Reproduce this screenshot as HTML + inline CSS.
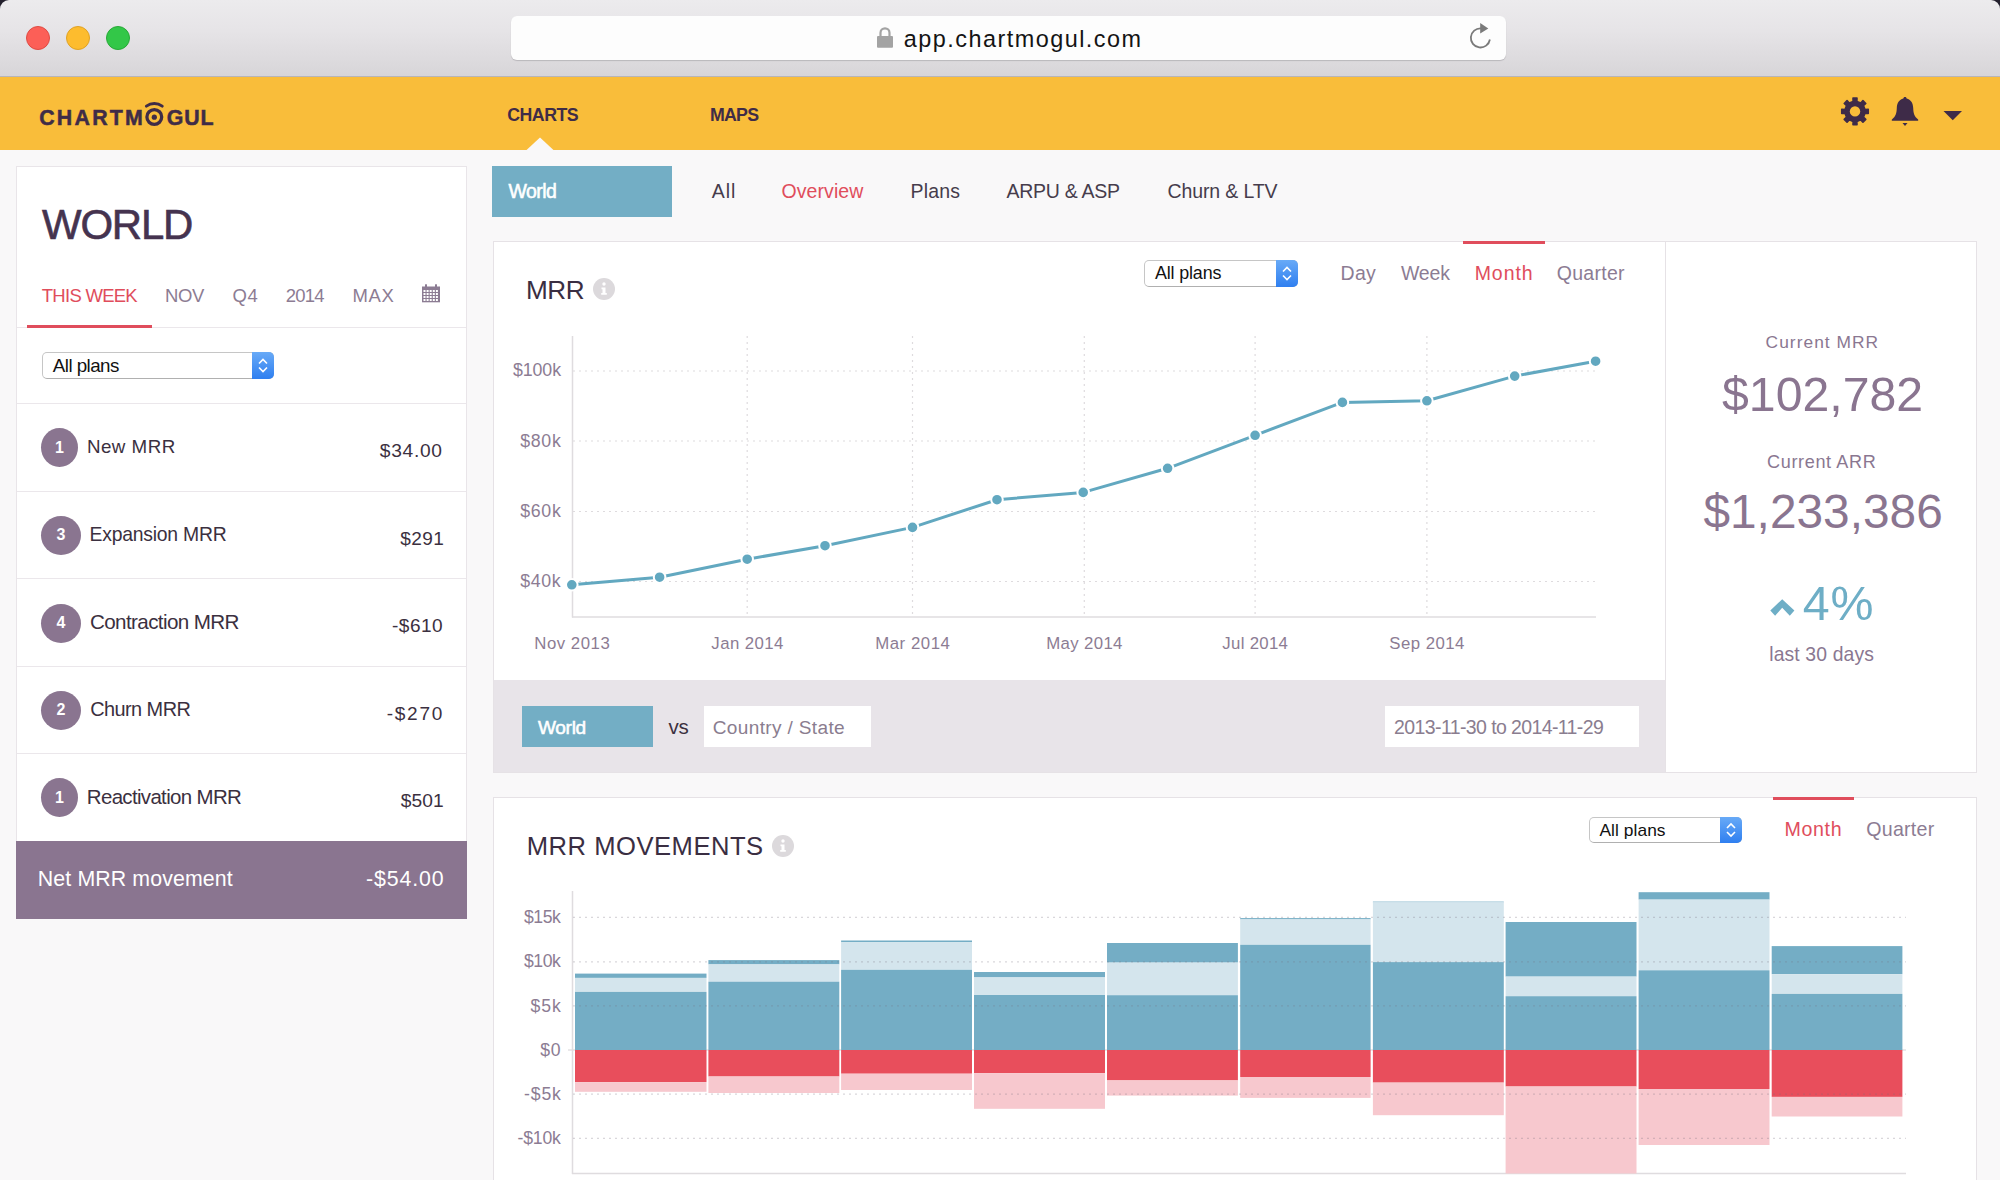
<!DOCTYPE html>
<html><head><meta charset="utf-8"><title>ChartMogul</title>
<style>
html,body{margin:0;padding:0}
body{width:2000px;height:1180px;overflow:hidden;position:relative;background:#f9f8f9;font-family:"Liberation Sans",sans-serif}
.r{position:absolute;display:block}
.t{position:absolute;white-space:nowrap}
.corner{position:absolute;top:0;width:12px;height:12px;background:#23202d}
</style></head><body>
<div class="corner" style="left:0"></div><div class="corner" style="right:0"></div>
<div class="r" style="left:0px;top:0px;width:2000px;height:77px;background:linear-gradient(#ecebed,#e6e4e7 40%,#d7d5d8);border-radius:9px 9px 0 0"></div>
<div class="r" style="left:0px;top:76px;width:2000px;height:1px;background:#b7b5b9"></div>
<div class="r" style="left:26px;top:26px;width:24px;height:24px;background:#fc5f57;border:1px solid #df4b43;box-sizing:border-box;border-radius:50%"></div>
<div class="r" style="left:66px;top:26px;width:24px;height:24px;background:#fdbc2e;border:1px solid #e0a225;box-sizing:border-box;border-radius:50%"></div>
<div class="r" style="left:106px;top:26px;width:24px;height:24px;background:#33c748;border:1px solid #28a937;box-sizing:border-box;border-radius:50%"></div>
<div class="r" style="left:511px;top:16px;width:995px;height:44px;background:#fdfdfd;border-radius:6px;box-shadow:0 1px 1px #b9b7bb"></div>
<svg class="r" style="left:870px;top:24px" width="30" height="30" viewBox="870 24 30 30"><path d="M880.5 36 v-3.2 a4.5 4.5 0 0 1 9 0 v3.2" fill="none" stroke="#a3a3a3" stroke-width="2.2"/><rect x="877" y="36" width="16" height="11.7" rx="1" fill="#a3a3a3"/></svg>
<svg class="r" style="left:1465px;top:18px" width="35" height="35" viewBox="1465 18 35 35"><path d="M1489.9 39.5 A9.6 9.6 0 1 1 1481 28.3" fill="none" stroke="#7a7a7a" stroke-width="1.8"/><path d="M1480.2 23 L1488.3 28.4 L1480.2 33.6 Z" fill="#7a7a7a"/></svg>
<div class="r" style="left:0px;top:77px;width:2000px;height:73px;background:#f9bd3a"></div>
<svg class="r" style="left:526px;top:136px" width="30" height="15" viewBox="526 136 30 15"><path d="M526 150.5 L540 137.5 L554 150.5 Z" fill="#f9f8f9"/></svg>
<svg class="r" style="left:138px;top:98px" width="34" height="32" viewBox="138 98 34 32"><circle cx="154.3" cy="117" r="7.4" fill="none" stroke="#3f2c47" stroke-width="3.3"/><circle cx="154.3" cy="117.2" r="2.6" fill="#3f2c47"/><path d="M146.4 106.1 A13.5 13.5 0 0 1 162.2 106.1" fill="none" stroke="#3f2c47" stroke-width="3" stroke-linecap="round"/></svg>
<svg class="r" style="left:1835px;top:92px" width="40" height="40" viewBox="1835 92 40 40"><path d="M1865.02 109.50 L1868.25 109.40 L1868.25 113.40 L1865.02 113.30 L1863.43 117.14 L1865.78 119.35 L1862.95 122.18 L1860.74 119.83 L1856.90 121.42 L1857.00 124.65 L1853.00 124.65 L1853.10 121.42 L1849.26 119.83 L1847.05 122.18 L1844.22 119.35 L1846.57 117.14 L1844.98 113.30 L1841.75 113.40 L1841.75 109.40 L1844.98 109.50 L1846.57 105.66 L1844.22 103.45 L1847.05 100.62 L1849.26 102.97 L1853.10 101.38 L1853.00 98.15 L1857.00 98.15 L1856.90 101.38 L1860.74 102.97 L1862.95 100.62 L1865.78 103.45 L1863.43 105.66 Z" fill="#3e2b48" stroke="#3e2b48" stroke-width="1.6" stroke-linejoin="round"/><circle cx="1855" cy="111.4" r="5.2" fill="#f9bd3a"/></svg>
<svg class="r" style="left:1888px;top:94px" width="34" height="34" viewBox="1888 94 34 34"><path d="M1905 97 c-1 0 -1.6 0.7 -1.6 1.6 c-4.3 1 -6.4 4.5 -6.6 9.5 c-0.2 5.5 -1.2 8.7 -4.9 11.3 c-0.4 0.5 -0.1 1.4 0.6 1.4 h25 c0.7 0 1 -0.9 0.6 -1.4 c-3.7 -2.6 -4.7 -5.8 -4.9 -11.3 c-0.2 -5 -2.3 -8.5 -6.6 -9.5 c0 -0.9 -0.6 -1.6 -1.6 -1.6 Z M1902.5 123 h5 l-2.5 3 Z" fill="#3e2b48"/></svg>
<svg class="r" style="left:1940px;top:108px" width="25" height="15" viewBox="1940 108 25 15"><path d="M1943.5 111 L1962 111 L1952.75 120.3 Z" fill="#3e2b48"/></svg>
<div class="r" style="left:16px;top:166px;width:451px;height:753px;background:#fff;border:1px solid #e9e5e9;box-sizing:border-box"></div>
<div class="r" style="left:17px;top:327px;width:449px;height:1px;background:#ebe7eb"></div>
<div class="r" style="left:27px;top:325px;width:125px;height:3px;background:#e04d5c"></div>
<div class="r" style="left:17px;top:403px;width:449px;height:1px;background:#ebe7eb"></div>
<div class="r" style="left:17px;top:491px;width:449px;height:1px;background:#ebe7eb"></div>
<div class="r" style="left:17px;top:578px;width:449px;height:1px;background:#ebe7eb"></div>
<div class="r" style="left:17px;top:666px;width:449px;height:1px;background:#ebe7eb"></div>
<div class="r" style="left:17px;top:753px;width:449px;height:1px;background:#ebe7eb"></div>
<div class="r" style="left:16px;top:841px;width:451px;height:78px;background:#8a7590"></div>
<svg class="r" style="left:420px;top:282px" width="22" height="22" viewBox="420 282 22 22"><rect x="422" y="286.5" width="18" height="15.8" fill="#8c7c93"/><rect x="425" y="284.3" width="2" height="3" fill="#8c7c93"/><rect x="435" y="284.3" width="2" height="3" fill="#8c7c93"/><rect x="423.5" y="290.0" width="2" height="2" fill="#fff"/><rect x="423.5" y="293.0" width="2" height="2" fill="#fff"/><rect x="423.5" y="296.0" width="2" height="2" fill="#fff"/><rect x="423.5" y="299.0" width="2" height="2" fill="#fff"/><rect x="426.6" y="290.0" width="2" height="2" fill="#fff"/><rect x="426.6" y="293.0" width="2" height="2" fill="#fff"/><rect x="426.6" y="296.0" width="2" height="2" fill="#fff"/><rect x="426.6" y="299.0" width="2" height="2" fill="#fff"/><rect x="429.7" y="290.0" width="2" height="2" fill="#fff"/><rect x="429.7" y="293.0" width="2" height="2" fill="#fff"/><rect x="429.7" y="296.0" width="2" height="2" fill="#fff"/><rect x="429.7" y="299.0" width="2" height="2" fill="#fff"/><rect x="432.8" y="290.0" width="2" height="2" fill="#fff"/><rect x="432.8" y="293.0" width="2" height="2" fill="#fff"/><rect x="432.8" y="296.0" width="2" height="2" fill="#fff"/><rect x="432.8" y="299.0" width="2" height="2" fill="#fff"/><rect x="435.9" y="290.0" width="2" height="2" fill="#fff"/><rect x="435.9" y="293.0" width="2" height="2" fill="#fff"/><rect x="435.9" y="296.0" width="2" height="2" fill="#fff"/><rect x="435.9" y="299.0" width="2" height="2" fill="#fff"/></svg>
<div class="r" style="left:41.0px;top:428.0px;width:37.0px;height:39.0px;background:#8a7590;border-radius:50%"></div>
<div class="t" style="left:49.5px;top:438.5px;width:20px;text-align:center;font-size:16px;line-height:18px;font-weight:700;color:#fff">1</div>
<div class="r" style="left:41.0px;top:515.9px;width:40.0px;height:39.0px;background:#8a7590;border-radius:50%"></div>
<div class="t" style="left:51px;top:526.4px;width:20px;text-align:center;font-size:16px;line-height:18px;font-weight:700;color:#fff">3</div>
<div class="r" style="left:41.0px;top:603.5px;width:40.0px;height:39.0px;background:#8a7590;border-radius:50%"></div>
<div class="t" style="left:51px;top:614px;width:20px;text-align:center;font-size:16px;line-height:18px;font-weight:700;color:#fff">4</div>
<div class="r" style="left:41.0px;top:690.8px;width:40.0px;height:39.0px;background:#8a7590;border-radius:50%"></div>
<div class="t" style="left:51px;top:701.3px;width:20px;text-align:center;font-size:16px;line-height:18px;font-weight:700;color:#fff">2</div>
<div class="r" style="left:41.0px;top:778.1px;width:37.0px;height:39.0px;background:#8a7590;border-radius:50%"></div>
<div class="t" style="left:49.5px;top:788.6px;width:20px;text-align:center;font-size:16px;line-height:18px;font-weight:700;color:#fff">1</div>
<div class="r" style="left:42px;top:352px;width:232px;height:27px;background:#fff;border:1px solid #c6c6c6;border-bottom-color:#b0b0b0;box-sizing:border-box;border-radius:5px"></div><div class="r" style="left:252px;top:352px;width:22px;height:27px;background:linear-gradient(#68aaf7,#2f7ff0);border-radius:0 5px 5px 0"></div><svg class="r" style="left:252px;top:352px" width="22" height="27" viewBox="252 352 22 27"><path d="M259.0 363.5 L263.0 359.5 L267.0 363.5 M259.0 367.5 L263.0 371.5 L267.0 367.5" fill="none" stroke="#fff" stroke-width="1.6"/></svg>
<div class="r" style="left:492px;top:166px;width:180px;height:51px;background:#73aec5"></div>
<div class="r" style="left:493px;top:241px;width:1484px;height:532px;background:#fff;border:1px solid #e6e2e6;box-sizing:border-box"></div>
<div class="r" style="left:1665px;top:242px;width:1px;height:530px;background:#e6e2e6"></div>
<div class="r" style="left:494px;top:680px;width:1171px;height:92px;background:#e8e4e9"></div>
<div class="r" style="left:1463px;top:241px;width:82px;height:3px;background:#e04d5c"></div>
<div class="r" style="left:1144px;top:260px;width:154px;height:27px;background:#fff;border:1px solid #c6c6c6;border-bottom-color:#b0b0b0;box-sizing:border-box;border-radius:5px"></div><div class="r" style="left:1276px;top:260px;width:22px;height:27px;background:linear-gradient(#68aaf7,#2f7ff0);border-radius:0 5px 5px 0"></div><svg class="r" style="left:1276px;top:260px" width="22" height="27" viewBox="1276 260 22 27"><path d="M1283.0 271.5 L1287.0 267.5 L1291.0 271.5 M1283.0 275.5 L1287.0 279.5 L1291.0 275.5" fill="none" stroke="#fff" stroke-width="1.6"/></svg>
<svg class="r" style="left:592px;top:276.5px" width="24" height="24" viewBox="592 276.5 24 24"><circle cx="604" cy="288.5" r="11" fill="#dcd9dc"/><circle cx="604" cy="283.5" r="1.7" fill="#fff"/><path d="M601.5 287.0 h4 v5.5 h1.3 v1.8 h-5.6 v-1.8 h1.3 v-3.7 h-1 Z" fill="#fff"/></svg>
<div class="r" style="left:522px;top:706px;width:131px;height:41px;background:#73aec5"></div>
<div class="r" style="left:704px;top:706px;width:167px;height:41px;background:#fff"></div>
<div class="r" style="left:1385px;top:706px;width:254px;height:41px;background:#fff"></div>
<svg class="r" style="left:1766px;top:594px" width="32" height="26" viewBox="1766 594 32 26"><path d="M1770.3 610.4 L1782.2 599.2 L1794.4 610.4 L1789.8 615.7 L1782.2 607.8 L1775.1 615.7 Z" fill="#6eaec6"/></svg>
<svg class="r" style="left:494px;top:300px" width="1170" height="380" viewBox="494 300 1170 380"><line x1="573" y1="371" x2="1597" y2="371" stroke="#dedbde" stroke-width="1.2" stroke-dasharray="2 4"/><line x1="573" y1="441" x2="1597" y2="441" stroke="#dedbde" stroke-width="1.2" stroke-dasharray="2 4"/><line x1="573" y1="511.5" x2="1597" y2="511.5" stroke="#dedbde" stroke-width="1.2" stroke-dasharray="2 4"/><line x1="573" y1="581.5" x2="1597" y2="581.5" stroke="#dedbde" stroke-width="1.2" stroke-dasharray="2 4"/><line x1="747.2" y1="336" x2="747.2" y2="616" stroke="#dedbde" stroke-width="1.2" stroke-dasharray="2 4"/><line x1="912.5" y1="336" x2="912.5" y2="616" stroke="#dedbde" stroke-width="1.2" stroke-dasharray="2 4"/><line x1="1084.3" y1="336" x2="1084.3" y2="616" stroke="#dedbde" stroke-width="1.2" stroke-dasharray="2 4"/><line x1="1255.1" y1="336" x2="1255.1" y2="616" stroke="#dedbde" stroke-width="1.2" stroke-dasharray="2 4"/><line x1="1426.9" y1="336" x2="1426.9" y2="616" stroke="#dedbde" stroke-width="1.2" stroke-dasharray="2 4"/><line x1="572.5" y1="336" x2="572.5" y2="617.5" stroke="#dfdcdf" stroke-width="1.5"/><line x1="572" y1="617" x2="1596" y2="617" stroke="#dfdcdf" stroke-width="1.5"/><polyline points="571.8,584.8 659.6,577.2 747.2,559.2 825,545.7 912.5,527.4 997,499.7 1083.2,492.4 1167.6,468.3 1255.1,435.3 1342.4,402.4 1426.9,400.8 1514.7,376.1 1595.6,361.2" fill="none" stroke="#62a8c0" stroke-width="3" stroke-linejoin="round"/><circle cx="571.8" cy="584.8" r="5.8" fill="#62a8c0" stroke="#fff" stroke-width="2"/><circle cx="659.6" cy="577.2" r="5.8" fill="#62a8c0" stroke="#fff" stroke-width="2"/><circle cx="747.2" cy="559.2" r="5.8" fill="#62a8c0" stroke="#fff" stroke-width="2"/><circle cx="825" cy="545.7" r="5.8" fill="#62a8c0" stroke="#fff" stroke-width="2"/><circle cx="912.5" cy="527.4" r="5.8" fill="#62a8c0" stroke="#fff" stroke-width="2"/><circle cx="997" cy="499.7" r="5.8" fill="#62a8c0" stroke="#fff" stroke-width="2"/><circle cx="1083.2" cy="492.4" r="5.8" fill="#62a8c0" stroke="#fff" stroke-width="2"/><circle cx="1167.6" cy="468.3" r="5.8" fill="#62a8c0" stroke="#fff" stroke-width="2"/><circle cx="1255.1" cy="435.3" r="5.8" fill="#62a8c0" stroke="#fff" stroke-width="2"/><circle cx="1342.4" cy="402.4" r="5.8" fill="#62a8c0" stroke="#fff" stroke-width="2"/><circle cx="1426.9" cy="400.8" r="5.8" fill="#62a8c0" stroke="#fff" stroke-width="2"/><circle cx="1514.7" cy="376.1" r="5.8" fill="#62a8c0" stroke="#fff" stroke-width="2"/><circle cx="1595.6" cy="361.2" r="5.8" fill="#62a8c0" stroke="#fff" stroke-width="2"/></svg>
<div class="r" style="left:493px;top:797px;width:1484px;height:403px;background:#fff;border:1px solid #e6e2e6;box-sizing:border-box"></div>
<div class="r" style="left:1773px;top:797px;width:81px;height:3px;background:#e04d5c"></div>
<div class="r" style="left:1589px;top:817px;width:153px;height:26px;background:#fff;border:1px solid #c6c6c6;border-bottom-color:#b0b0b0;box-sizing:border-box;border-radius:5px"></div><div class="r" style="left:1720px;top:817px;width:22px;height:26px;background:linear-gradient(#68aaf7,#2f7ff0);border-radius:0 5px 5px 0"></div><svg class="r" style="left:1720px;top:817px" width="22" height="26" viewBox="1720 817 22 26"><path d="M1727.0 828.0 L1731.0 824.0 L1735.0 828.0 M1727.0 832.0 L1731.0 836.0 L1735.0 832.0" fill="none" stroke="#fff" stroke-width="1.6"/></svg>
<svg class="r" style="left:771px;top:833.5px" width="24" height="24" viewBox="771 833.5 24 24"><circle cx="783" cy="845.5" r="11" fill="#dcd9dc"/><circle cx="783" cy="840.5" r="1.7" fill="#fff"/><path d="M780.5 844.0 h4 v5.5 h1.3 v1.8 h-5.6 v-1.8 h1.3 v-3.7 h-1 Z" fill="#fff"/></svg>
<svg class="r" style="left:494px;top:860px" width="1480" height="320" viewBox="494 860 1480 320"><line x1="568" y1="1050" x2="1906" y2="1050" stroke="#d5d2d5" stroke-width="1"/><line x1="572.5" y1="891" x2="572.5" y2="1174" stroke="#dfdcdf" stroke-width="1.5"/><line x1="572" y1="1173.5" x2="1906" y2="1173.5" stroke="#dfdcdf" stroke-width="1.5"/><rect x="575" y="973.6" width="131.5" height="4.3" fill="#74adc5"/><rect x="575" y="977.9" width="131.5" height="14.0" fill="#d4e5ed"/><rect x="575" y="991.9" width="131.5" height="58.1" fill="#74adc5"/><rect x="575" y="1050" width="131.5" height="32.1" fill="#e84e5c"/><rect x="575" y="1082.1" width="131.5" height="9.7" fill="#f7c8ce"/><rect x="708.4" y="960.1" width="130.9" height="4.3" fill="#74adc5"/><rect x="708.4" y="964.4" width="130.9" height="17.3" fill="#d4e5ed"/><rect x="708.4" y="981.7" width="130.9" height="68.3" fill="#74adc5"/><rect x="708.4" y="1050" width="130.9" height="26.5" fill="#e84e5c"/><rect x="708.4" y="1076.5" width="130.9" height="16.5" fill="#f7c8ce"/><rect x="841.1" y="940.5" width="130.9" height="1.8" fill="#74adc5"/><rect x="841.1" y="942.3" width="130.9" height="27.5" fill="#d4e5ed"/><rect x="841.1" y="969.8" width="130.9" height="80.2" fill="#74adc5"/><rect x="841.1" y="1050" width="130.9" height="23.7" fill="#e84e5c"/><rect x="841.1" y="1073.7" width="130.9" height="16.3" fill="#f7c8ce"/><rect x="974" y="972" width="131.0" height="5.4" fill="#74adc5"/><rect x="974" y="977.4" width="131.0" height="17.6" fill="#d4e5ed"/><rect x="974" y="995" width="131.0" height="55.0" fill="#74adc5"/><rect x="974" y="1050" width="131.0" height="23.2" fill="#e84e5c"/><rect x="974" y="1073.2" width="131.0" height="35.6" fill="#f7c8ce"/><rect x="1107" y="943" width="130.9" height="19.6" fill="#74adc5"/><rect x="1107" y="962.6" width="130.9" height="32.6" fill="#d4e5ed"/><rect x="1107" y="995.2" width="130.9" height="54.8" fill="#74adc5"/><rect x="1107" y="1050" width="130.9" height="30.4" fill="#e84e5c"/><rect x="1107" y="1080.4" width="130.9" height="15.2" fill="#f7c8ce"/><rect x="1240.2" y="918.1" width="130.4" height="1.3" fill="#74adc5"/><rect x="1240.2" y="919.4" width="130.4" height="25.4" fill="#d4e5ed"/><rect x="1240.2" y="944.8" width="130.4" height="105.2" fill="#74adc5"/><rect x="1240.2" y="1050" width="130.4" height="27.0" fill="#e84e5c"/><rect x="1240.2" y="1077" width="130.4" height="20.9" fill="#f7c8ce"/><rect x="1372.9" y="901.6" width="130.9" height="0.8" fill="#74adc5"/><rect x="1372.9" y="902.4" width="130.9" height="59.7" fill="#d4e5ed"/><rect x="1372.9" y="962.1" width="130.9" height="87.9" fill="#74adc5"/><rect x="1372.9" y="1050" width="130.9" height="32.6" fill="#e84e5c"/><rect x="1372.9" y="1082.6" width="130.9" height="32.6" fill="#f7c8ce"/><rect x="1505.6" y="922" width="130.9" height="54.6" fill="#74adc5"/><rect x="1505.6" y="976.6" width="130.9" height="19.6" fill="#d4e5ed"/><rect x="1505.6" y="996.2" width="130.9" height="53.8" fill="#74adc5"/><rect x="1505.6" y="1050" width="130.9" height="36.5" fill="#e84e5c"/><rect x="1505.6" y="1086.5" width="130.9" height="87.0" fill="#f7c8ce"/><rect x="1638.6" y="892.2" width="130.9" height="7.4" fill="#74adc5"/><rect x="1638.6" y="899.6" width="130.9" height="70.7" fill="#d4e5ed"/><rect x="1638.6" y="970.3" width="130.9" height="79.7" fill="#74adc5"/><rect x="1638.6" y="1050" width="130.9" height="39.0" fill="#e84e5c"/><rect x="1638.6" y="1089" width="130.9" height="56.0" fill="#f7c8ce"/><rect x="1771.7" y="946.1" width="130.7" height="28.0" fill="#74adc5"/><rect x="1771.7" y="974.1" width="130.7" height="19.8" fill="#d4e5ed"/><rect x="1771.7" y="993.9" width="130.7" height="56.1" fill="#74adc5"/><rect x="1771.7" y="1050" width="130.7" height="46.9" fill="#e84e5c"/><rect x="1771.7" y="1096.9" width="130.7" height="19.6" fill="#f7c8ce"/><line x1="573" y1="917.4" x2="1906" y2="917.4" stroke="rgba(120,110,125,0.28)" stroke-width="1.2" stroke-dasharray="2 4"/><line x1="573" y1="961.8" x2="1906" y2="961.8" stroke="rgba(120,110,125,0.28)" stroke-width="1.2" stroke-dasharray="2 4"/><line x1="573" y1="1005.9" x2="1906" y2="1005.9" stroke="rgba(120,110,125,0.28)" stroke-width="1.2" stroke-dasharray="2 4"/><line x1="573" y1="1094.2" x2="1906" y2="1094.2" stroke="rgba(120,110,125,0.28)" stroke-width="1.2" stroke-dasharray="2 4"/><line x1="573" y1="1138.4" x2="1906" y2="1138.4" stroke="rgba(120,110,125,0.28)" stroke-width="1.2" stroke-dasharray="2 4"/></svg>
<div class="t" style="left:39.20px;top:107.75px;font-size:21.34px;line-height:21.34px;font-weight:700;letter-spacing:2.247px;color:#3f2c47;-webkit-text-stroke:0.5px #3f2c47">CHARTM</div>
<div class="t" style="left:166.70px;top:107.75px;font-size:21.34px;line-height:21.34px;font-weight:700;letter-spacing:0.948px;color:#3f2c47;-webkit-text-stroke:0.5px #3f2c47">GUL</div>
<div class="t" style="left:507.30px;top:107.46px;font-size:17.78px;line-height:17.78px;font-weight:700;letter-spacing:-0.544px;color:#3f2c47">CHARTS</div>
<div class="t" style="left:709.90px;top:107.46px;font-size:17.78px;line-height:17.78px;font-weight:700;letter-spacing:-0.736px;color:#3f2c47">MAPS</div>
<div class="t" style="left:903.80px;top:28.18px;font-size:23.43px;line-height:23.43px;font-weight:400;letter-spacing:1.472px;color:#141414">app.chartmogul.com</div>
<div class="t" style="left:42.00px;top:204.30px;font-size:41.96px;line-height:41.96px;font-weight:400;letter-spacing:-1.185px;color:#45334f;-webkit-text-stroke:0.6px #45334f">WORLD</div>
<div class="t" style="left:41.80px;top:286.86px;font-size:18.49px;line-height:18.49px;font-weight:400;letter-spacing:-0.722px;color:#e04d5c">THIS WEEK</div>
<div class="t" style="left:165.00px;top:286.86px;font-size:18.49px;line-height:18.49px;font-weight:400;letter-spacing:-0.318px;color:#8c7c93">NOV</div>
<div class="t" style="left:232.60px;top:286.86px;font-size:18.49px;line-height:18.49px;font-weight:400;letter-spacing:0.517px;color:#8c7c93">Q4</div>
<div class="t" style="left:285.80px;top:286.86px;font-size:18.49px;line-height:18.49px;font-weight:400;letter-spacing:-0.817px;color:#8c7c93">2014</div>
<div class="t" style="left:352.50px;top:286.86px;font-size:18.49px;line-height:18.49px;font-weight:400;letter-spacing:0.582px;color:#8c7c93">MAX</div>
<div class="t" style="left:52.80px;top:356.91px;font-size:18.78px;line-height:18.78px;font-weight:400;letter-spacing:-0.547px;color:#111">All plans</div>
<div class="t" style="left:86.90px;top:438.11px;font-size:18.78px;line-height:18.78px;font-weight:400;letter-spacing:0.488px;color:#3b3040">New MRR</div>
<div class="t" style="left:379.80px;top:440.55px;font-size:19.20px;line-height:19.20px;font-weight:400;letter-spacing:0.690px;color:#3b3040">$34.00</div>
<div class="t" style="left:89.50px;top:525.03px;font-size:19.35px;line-height:19.35px;font-weight:400;letter-spacing:-0.216px;color:#3b3040">Expansion MRR</div>
<div class="t" style="left:400.30px;top:529.07px;font-size:19.06px;line-height:19.06px;font-weight:400;letter-spacing:0.399px;color:#3b3040">$291</div>
<div class="t" style="left:90.00px;top:612.15px;font-size:20.63px;line-height:20.63px;font-weight:400;letter-spacing:-0.627px;color:#3b3040">Contraction MRR</div>
<div class="t" style="left:392.00px;top:616.07px;font-size:19.06px;line-height:19.06px;font-weight:400;letter-spacing:0.488px;color:#3b3040">-$610</div>
<div class="t" style="left:90.20px;top:699.95px;font-size:19.91px;line-height:19.91px;font-weight:400;letter-spacing:-0.554px;color:#3b3040">Churn MRR</div>
<div class="t" style="left:386.80px;top:703.57px;font-size:19.06px;line-height:19.06px;font-weight:400;letter-spacing:1.688px;color:#3b3040">-$270</div>
<div class="t" style="left:86.80px;top:787.07px;font-size:20.48px;line-height:20.48px;font-weight:400;letter-spacing:-0.664px;color:#3b3040">Reactivation MRR</div>
<div class="t" style="left:400.80px;top:791.05px;font-size:19.20px;line-height:19.20px;font-weight:400;letter-spacing:0.054px;color:#3b3040">$501</div>
<div class="t" style="left:37.80px;top:868.75px;font-size:21.34px;line-height:21.34px;font-weight:400;letter-spacing:0.118px;color:#ffffff">Net MRR movement</div>
<div class="t" style="left:366.10px;top:868.75px;font-size:21.34px;line-height:21.34px;font-weight:400;letter-spacing:0.851px;color:#ffffff">-$54.00</div>
<div class="t" style="left:508.40px;top:181.51px;font-size:19.49px;line-height:19.49px;font-weight:400;letter-spacing:-0.524px;color:#ffffff;-webkit-text-stroke:0.55px #ffffff">World</div>
<div class="t" style="left:711.76px;top:181.51px;font-size:19.49px;line-height:19.49px;font-weight:400;letter-spacing:0.974px;color:#463c4c">All</div>
<div class="t" style="left:781.60px;top:181.51px;font-size:19.49px;line-height:19.49px;font-weight:400;letter-spacing:0.066px;color:#e04d5c">Overview</div>
<div class="t" style="left:910.50px;top:181.51px;font-size:19.49px;line-height:19.49px;font-weight:400;letter-spacing:0.175px;color:#463c4c">Plans</div>
<div class="t" style="left:1006.60px;top:181.51px;font-size:19.49px;line-height:19.49px;font-weight:400;letter-spacing:-0.284px;color:#463c4c">ARPU &amp; ASP</div>
<div class="t" style="left:1167.50px;top:181.51px;font-size:19.49px;line-height:19.49px;font-weight:400;letter-spacing:-0.109px;color:#463c4c">Churn &amp; LTV</div>
<div class="t" style="left:526.10px;top:276.96px;font-size:26.17px;line-height:26.17px;font-weight:400;letter-spacing:-0.523px;color:#3a2e42">MRR</div>
<div class="t" style="left:1155.00px;top:265.04px;font-size:17.92px;line-height:17.92px;font-weight:400;letter-spacing:-0.160px;color:#111">All plans</div>
<div class="t" style="left:1340.50px;top:263.91px;font-size:19.49px;line-height:19.49px;font-weight:400;letter-spacing:0.345px;color:#8c7c93">Day</div>
<div class="t" style="left:1401.00px;top:263.91px;font-size:19.49px;line-height:19.49px;font-weight:400;letter-spacing:-0.171px;color:#8c7c93">Week</div>
<div class="t" style="left:1474.70px;top:263.91px;font-size:19.49px;line-height:19.49px;font-weight:400;letter-spacing:0.945px;color:#e04d5c">Month</div>
<div class="t" style="left:1556.80px;top:263.91px;font-size:19.49px;line-height:19.49px;font-weight:400;letter-spacing:0.271px;color:#8c7c93">Quarter</div>
<div class="t" style="left:512.90px;top:362.26px;font-size:17.78px;line-height:17.78px;font-weight:400;letter-spacing:-0.063px;color:#8c7c93">$100k</div>
<div class="t" style="left:520.20px;top:432.76px;font-size:17.78px;line-height:17.78px;font-weight:400;letter-spacing:0.712px;color:#8c7c93">$80k</div>
<div class="t" style="left:520.20px;top:503.26px;font-size:17.78px;line-height:17.78px;font-weight:400;letter-spacing:0.712px;color:#8c7c93">$60k</div>
<div class="t" style="left:520.20px;top:573.26px;font-size:17.78px;line-height:17.78px;font-weight:400;letter-spacing:0.645px;color:#8c7c93">$40k</div>
<div class="t" style="left:534.30px;top:635.60px;font-size:16.79px;line-height:16.79px;font-weight:400;letter-spacing:0.512px;color:#8c7c93">Nov 2013</div>
<div class="t" style="left:711.30px;top:635.60px;font-size:16.79px;line-height:16.79px;font-weight:400;letter-spacing:0.439px;color:#8c7c93">Jan 2014</div>
<div class="t" style="left:875.20px;top:635.60px;font-size:16.79px;line-height:16.79px;font-weight:400;letter-spacing:0.547px;color:#8c7c93">Mar 2014</div>
<div class="t" style="left:1046.20px;top:635.60px;font-size:16.79px;line-height:16.79px;font-weight:400;letter-spacing:0.361px;color:#8c7c93">May 2014</div>
<div class="t" style="left:1222.30px;top:635.60px;font-size:16.79px;line-height:16.79px;font-weight:400;letter-spacing:0.311px;color:#8c7c93">Jul 2014</div>
<div class="t" style="left:1389.30px;top:635.60px;font-size:16.79px;line-height:16.79px;font-weight:400;letter-spacing:0.467px;color:#8c7c93">Sep 2014</div>
<div class="t" style="left:1765.60px;top:334.12px;font-size:17.35px;line-height:17.35px;font-weight:400;letter-spacing:1.033px;color:#8a7791">Current MRR</div>
<div class="t" style="left:1722.00px;top:369.50px;font-size:48.22px;line-height:48.22px;font-weight:400;letter-spacing:0.004px;color:#8a7590">$102,782</div>
<div class="t" style="left:1767.10px;top:452.52px;font-size:18.07px;line-height:18.07px;font-weight:400;letter-spacing:0.625px;color:#8a7791">Current ARR</div>
<div class="t" style="left:1703.40px;top:488.27px;font-size:47.80px;line-height:47.80px;font-weight:400;letter-spacing:0.014px;color:#8a7590">$1,233,386</div>
<div class="t" style="left:1802.84px;top:578.88px;font-size:48.36px;line-height:48.36px;font-weight:400;letter-spacing:0.000px;color:#6eaec6">4</div>
<div class="t" style="left:1830.49px;top:578.88px;font-size:48.36px;line-height:48.36px;font-weight:400;letter-spacing:0.000px;color:#6eaec6">%</div>
<div class="t" style="left:1769.20px;top:645.13px;font-size:19.35px;line-height:19.35px;font-weight:400;letter-spacing:0.140px;color:#8a7791">last 30 days</div>
<div class="t" style="left:538.00px;top:718.07px;font-size:19.06px;line-height:19.06px;font-weight:400;letter-spacing:-0.307px;color:#ffffff;-webkit-text-stroke:0.55px #ffffff">World</div>
<div class="t" style="left:668.57px;top:716.83px;font-size:20.53px;line-height:20.53px;font-weight:400;letter-spacing:-0.411px;color:#3b3040">vs</div>
<div class="t" style="left:712.70px;top:718.07px;font-size:19.06px;line-height:19.06px;font-weight:400;letter-spacing:0.355px;color:#8a7d8f">Country / State</div>
<div class="t" style="left:1394.10px;top:717.51px;font-size:19.49px;line-height:19.49px;font-weight:400;letter-spacing:-0.600px;color:#8a7d8f">2013-11-30 to 2014-11-29</div>
<div class="t" style="left:526.70px;top:833.84px;font-size:25.60px;line-height:25.60px;font-weight:400;letter-spacing:0.512px;color:#3a2e42">MRR MOVEMENTS</div>
<div class="t" style="left:1599.40px;top:821.92px;font-size:17.35px;line-height:17.35px;font-weight:400;letter-spacing:0.073px;color:#111">All plans</div>
<div class="t" style="left:1784.40px;top:820.19px;font-size:19.63px;line-height:19.63px;font-weight:400;letter-spacing:0.665px;color:#e04d5c">Month</div>
<div class="t" style="left:1866.30px;top:820.19px;font-size:19.63px;line-height:19.63px;font-weight:400;letter-spacing:0.232px;color:#8c7c93">Quarter</div>
<div class="t" style="left:523.90px;top:909.08px;font-size:17.64px;line-height:17.64px;font-weight:400;letter-spacing:-0.409px;color:#8c7c93">$15k</div>
<div class="t" style="left:523.90px;top:953.48px;font-size:17.64px;line-height:17.64px;font-weight:400;letter-spacing:-0.409px;color:#8c7c93">$10k</div>
<div class="t" style="left:530.56px;top:997.78px;font-size:17.64px;line-height:17.64px;font-weight:400;letter-spacing:0.882px;color:#8c7c93">$5k</div>
<div class="t" style="left:540.20px;top:1042.08px;font-size:17.64px;line-height:17.64px;font-weight:400;letter-spacing:0.882px;color:#8c7c93">$0</div>
<div class="t" style="left:524.00px;top:1086.28px;font-size:17.64px;line-height:17.64px;font-weight:400;letter-spacing:0.869px;color:#8c7c93">-$5k</div>
<div class="t" style="left:517.60px;top:1130.48px;font-size:17.64px;line-height:17.64px;font-weight:400;letter-spacing:-0.200px;color:#8c7c93">-$10k</div>
</body></html>
